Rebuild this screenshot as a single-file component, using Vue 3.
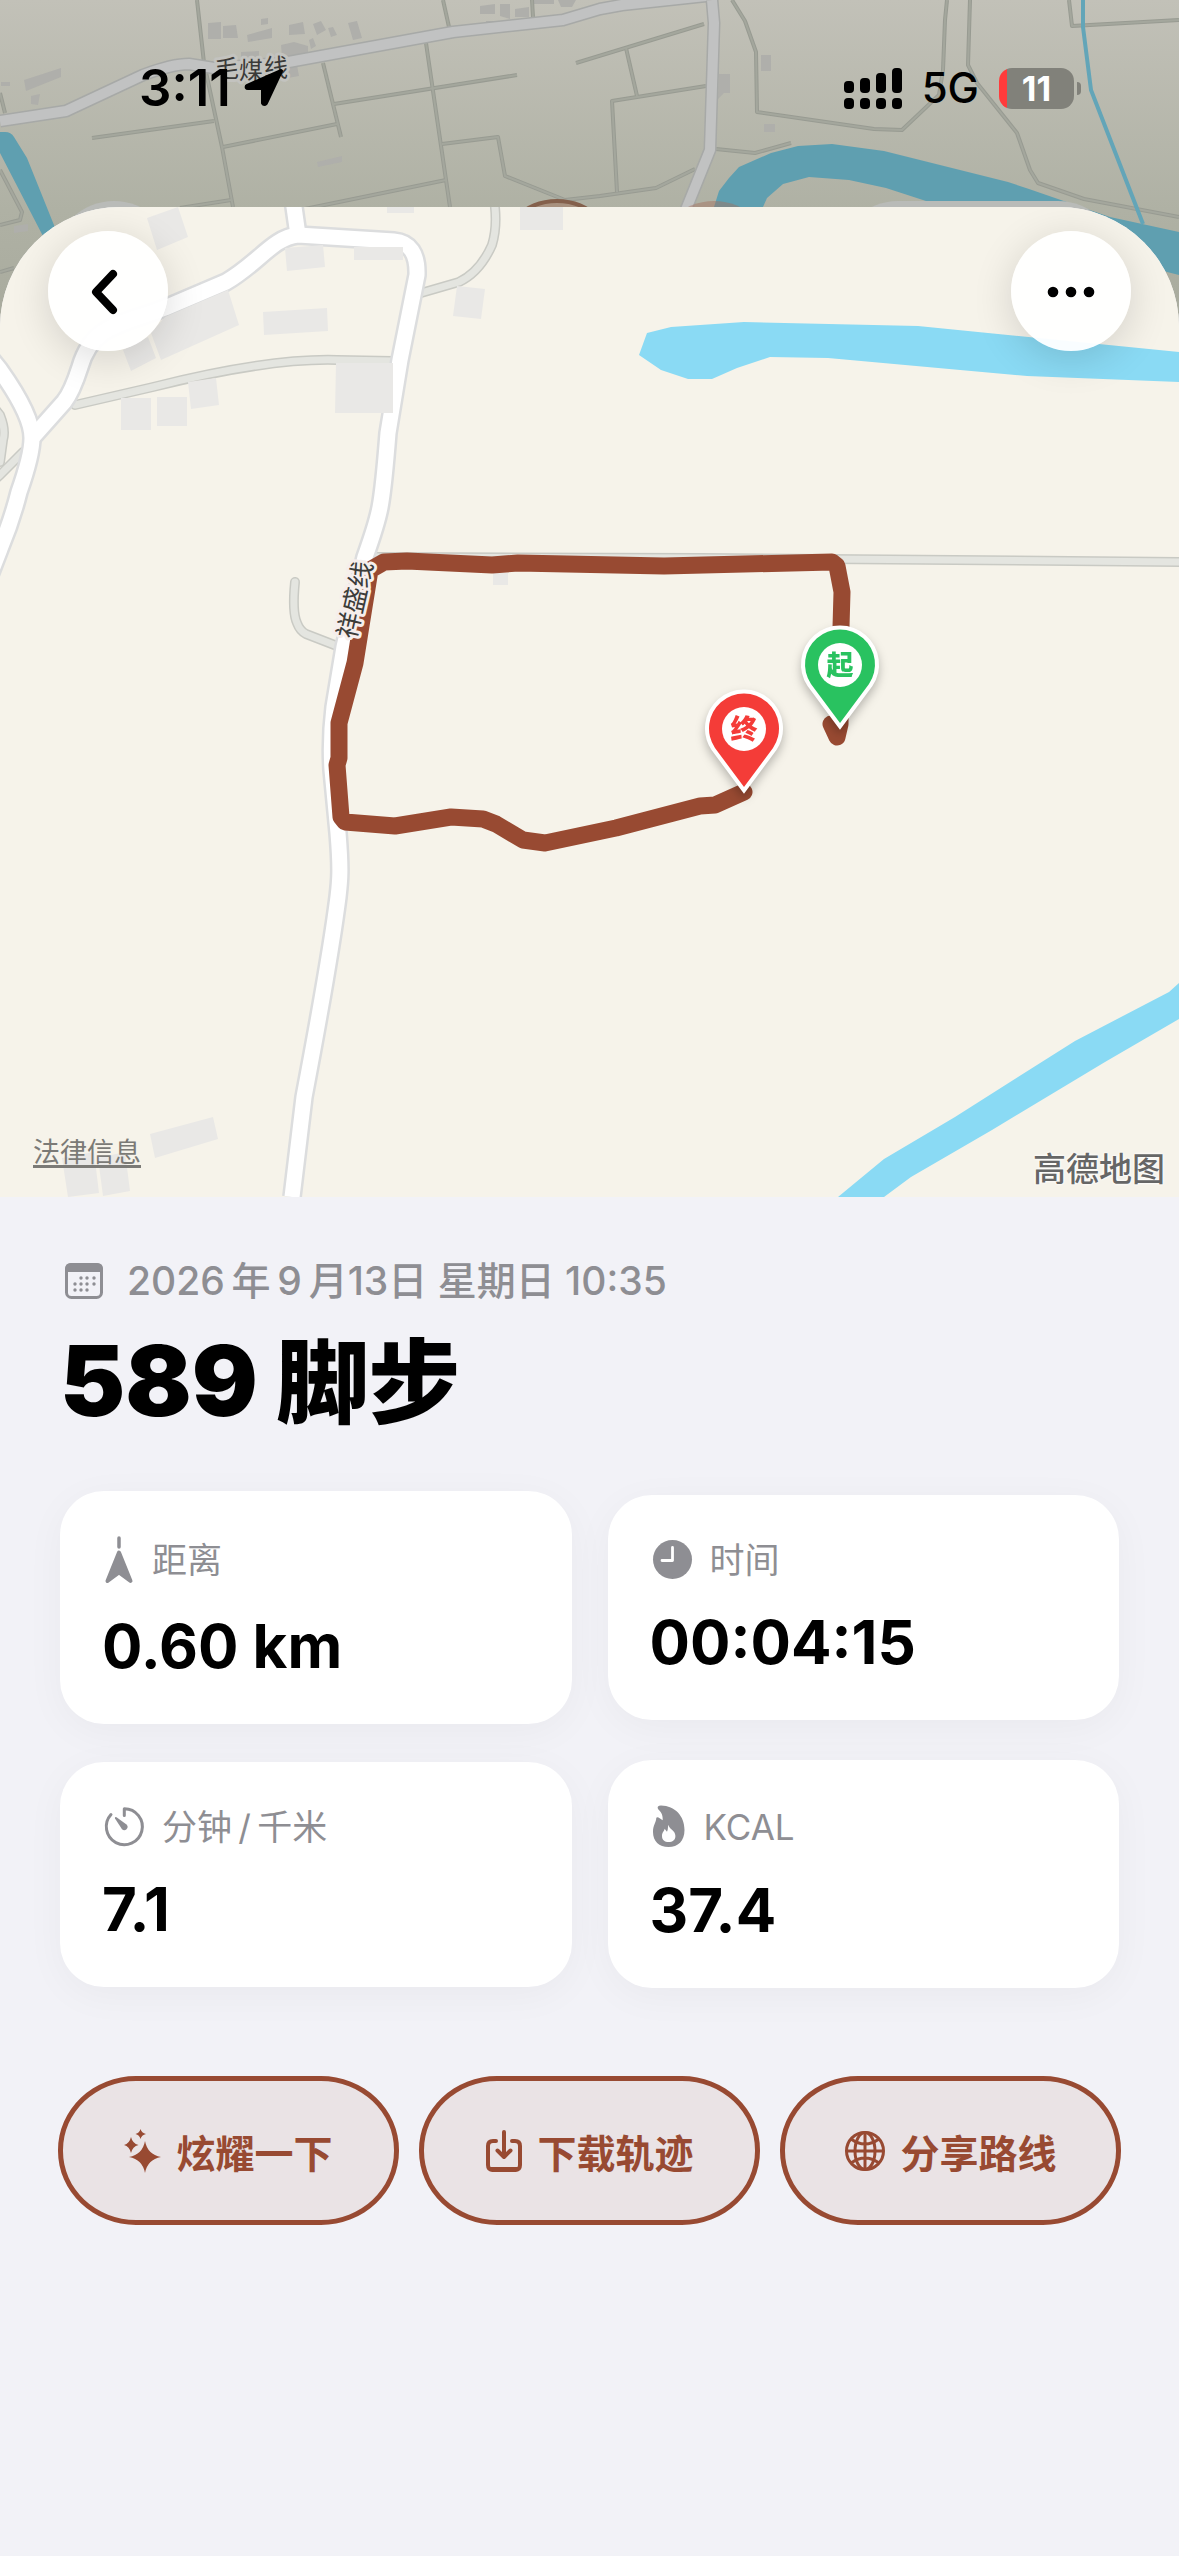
<template>
  <div class="screen">
    <svg class="backdrop" viewBox="0 0 1179 420" aria-hidden="true">
      <defs>
        <linearGradient id="dim" x1="0" y1="0" x2="0" y2="1">
          <stop offset="0" stop-color="#c2c1b8" />
          <stop offset=".5" stop-color="#afb1a4" />
          <stop offset="1" stop-color="#a3a598" />
        </linearGradient>
      </defs>
      <rect width="1179" height="420" fill="url(#dim)" />
      <path class="b-house" :d="backHouses" />
      <path v-for="d in backLanes" :key="d" class="b-lane-edge" :d="d" />
      <path v-for="d in backLanes" :key="d" class="b-lane" :d="d" />
      <path v-for="d in backRoads" :key="d" class="b-road-edge" :d="d" />
      <path v-for="d in backRoads" :key="d" class="b-road" :d="d" />
      <path class="b-water" d="M714 207L719 191L729 178L739 167L771 153L798 146L832 144L884 151L1008 182L1029 189L1110 217L1179 232V275L1100 255L926 201L886 188L849 180L809 177L783 184L767 198L763 207V230H708Z" />
      <path class="b-water" d="M0 132H5Q11 132 14 137L27 158L60 240H45L0 153Z" />
      <path class="b-stream" d="M1083 0V27L1091 90L1143 224" />
      <circle cx="114" cy="261" r="60" fill="#b9bbb8" />
      <rect x="838" y="201" width="280" height="120" rx="60" fill="#b9bbb8" />
      <circle cx="557" cy="261" r="60" fill="#a8917f" stroke="#84604c" stroke-width="4" />
      <circle cx="714" cy="261" r="60" fill="#a56e5e" fill-opacity=".45" />
      <text class="road-name dim" x="215 239 264" y="77 79 76">毛煤线</text>
    </svg>

    <header class="status">
      <div class="status-left">
        <span class="clock">3:11</span>
        <svg width="42" height="40" viewBox="0 0 42 40" aria-hidden="true">
          <path d="M38 3L4 18Q3 20 5 20H20V35Q21 37 23 35Z" stroke="#000" stroke-width="4" stroke-linejoin="round" />
        </svg>
      </div>
      <div class="status-right">
        <svg width="58" height="41" viewBox="0 0 58 41" aria-hidden="true">
          <rect v-for="(h, i) in [12, 15, 20, 25]" :key="h" :x="i * 16" :y="25 - h" width="10" :height="h" rx="4" />
          <rect v-for="i in 4" :key="'s' + i" :x="i * 16 - 16" y="30" width="10" height="11" rx="4" />
        </svg>
        <span class="network">5G</span>
        <span class="battery"><span>11</span></span>
      </div>
    </header>

    <main class="sheet">
      <div class="map">
        <svg class="map-art" viewBox="0 207 1179 990" role="img" aria-label="路线地图">
          <rect y="207" width="1179" height="990" fill="#f6f3ea" />
          <path class="water" d="M639 355L647 333L671 327L744 322L918 326L1179 352V382L1027 376L828 358L770 357L737 368L712 379H688L661 370Z" />
          <path class="water" d="M1179 983L1169 992L1075 1041L955 1117L884 1159L838 1197H884L911 1177L992 1130L1105 1062L1179 1019Z" />
          <path v-for="d in lanes" :key="d" class="lane-edge" :d="d" />
          <path v-for="d in lanes" :key="d" class="lane" :d="d" />
          <path v-for="d in roads" :key="d" class="road-edge" :d="d" />
          <path v-for="d in roads" :key="d" class="road" :d="d" />
          <path class="house" :d="houses" />
          <path class="route" d="M831 724L837 737L840 724L841 627L842 592L837 566L832 562L664 566L518 563L492 565L407 561L384 562L370 570L355 663L339 723L339 758L337 765L341 817L345 822L395 826L451 817L483 819L496 824L523 840L545 843L616 828L700 806L715 805L744 792" />
          <text class="road-name" transform="translate(364 602) rotate(-77)" text-anchor="middle">祥盛线</text>
          <g v-for="p in pins" :key="p.label" class="pin" :transform="`translate(${p.x} ${p.y})`">
            <path class="pin-edge" :d="pinShape" />
            <path :fill="p.color" :d="pinShape" />
            <circle r="22" fill="#fff" />
            <text text-anchor="middle" y="10" :fill="p.color">{{ p.label }}</text>
          </g>
        </svg>
        <button class="round back" aria-label="返回">
          <svg width="48" height="48" viewBox="0 0 48 48"><path d="M29 7L12 25L29 43" fill="none" stroke="#000" stroke-width="8" stroke-linecap="round" stroke-linejoin="round" /></svg>
        </button>
        <button class="round more" aria-label="更多">
          <svg width="48" height="48" viewBox="0 0 48 48"><circle v-for="x in [6, 24, 42]" :key="x" :cx="x" cy="25" r="5.3" /></svg>
        </button>
        <a class="legal" href="#">法律信息</a>
        <span class="brand">高德地图</span>
      </div>

      <section class="summary">
        <p class="date">
          <svg width="38" height="36" viewBox="0 0 38 36" aria-hidden="true">
            <rect x="1.5" y="1.5" width="35" height="33" rx="5" fill="none" stroke="#8e8e93" stroke-width="3" />
            <path d="M0 9V6Q0 0 6 0H32Q38 0 38 6V9Z" fill="#8e8e93" />
            <circle v-for="[x, y] in calendarDots" :key="`${x}-${y}`" :cx="x" :cy="y" r="1.7" fill="#8e8e93" />
          </svg>
          <time datetime="2026-09-13T10:35">2026&thinsp;年&thinsp;9&thinsp;月13日 星期日 10:35</time>
        </p>
        <h1><span class="count">589</span> 脚步</h1>
      </section>

      <dl class="stats">
        <div v-for="s in stats" :key="s.label" class="card">
          <dt>
            <svg v-if="s.icon === 'distance'" width="34" height="54" viewBox="0 0 34 54">
              <path d="M17 5V14" stroke="#8e8e93" stroke-width="3.5" stroke-linecap="round" />
              <path d="M17 19.5L28.5 48L17 39.5L5.5 48Z" fill="#8e8e93" stroke="#8e8e93" stroke-width="4" stroke-linejoin="round" />
            </svg>
            <svg v-else-if="s.icon === 'time'" width="44" height="46" viewBox="0 0 44 46">
              <circle cx="22.5" cy="22.5" r="19.5" fill="#8e8e93" />
              <path d="M22.5 10.5V23.5H12" fill="none" stroke="#fff" stroke-width="2.8" stroke-linecap="round" stroke-linejoin="round" />
            </svg>
            <svg v-else-if="s.icon === 'pace'" width="44" height="46" viewBox="0 0 44 46">
              <path d="M22.3 11.5V4.7A18 18 0 1 1 9 10.6" fill="none" stroke="#8e8e93" stroke-width="3" stroke-linecap="round" stroke-linejoin="round" />
              <path d="M13.2 13.2Q13.8 12.7 14.5 13.2L24.5 20.6A3.2 3.2 0 0 1 20 25.2L13 14.5Q12.7 13.7 13.2 13.2Z" fill="#8e8e93" />
            </svg>
            <svg v-else width="38" height="49" viewBox="0 0 38 49">
              <path fill="#8e8e93" fill-rule="evenodd" d="M8 7C7 5 8 3.6 11 3.6C25 4 34.5 14 34.5 28C34.5 39 28 45 18.6 45C9 45 3 39 3 30C3 23 6 21 6.3 16Q6.6 14.6 8.5 15.5L12.7 18.3C13 12 10.5 9.5 8 7ZM18.6 22.7C18.6 27 25.4 28 25.4 34C25.4 38 22.5 40 18.6 40C14.8 40 12 38 12 34C12 30 14.5 29 14.6 26.8L17 29.7C18.5 27 17.5 24.5 18.6 22.7Z" />
            </svg>
            {{ s.label }}
          </dt>
          <dd>{{ s.value }}</dd>
        </div>
      </dl>

      <div class="actions">
        <button>
          <svg width="38" height="44" viewBox="0 0 38 44">
            <path d="M21 12Q23.5 25.5 37 28Q23.5 30.5 21 44Q18.5 30.5 5 28Q18.5 25.5 21 12ZM7 8Q8.5 14.5 14.5 16Q8.5 17.5 7 24Q5.5 17.5 0 16Q5.5 14.5 7 8ZM16.5 0Q17.5 4 22 5Q17.5 6 16.5 10Q15.5 6 11.5 5Q15.5 4 16.5 0Z" fill="#984a32" />
          </svg>
          炫耀一下
        </button>
        <button>
          <svg width="38" height="44" viewBox="0 0 38 44">
            <g fill="none" stroke="#984a32" stroke-width="4" stroke-linecap="round" stroke-linejoin="round">
              <path d="M11 12H8Q3 12 3 17V36Q3 41 8 41H30Q35 41 35 36V17Q35 12 30 12H27" />
              <path d="M19 3V27M12.5 21.5L19 28L25.5 21.5" />
            </g>
            <path d="M4 38H34L31 43H7Z" fill="#984a32" />
          </svg>
          下载轨迹
        </button>
        <button>
          <svg width="42" height="44" viewBox="0 0 42 44">
            <g fill="none" stroke="#984a32" stroke-width="3">
              <circle cx="21" cy="22" r="18.5" />
              <ellipse cx="21" cy="22" rx="10" ry="18.5" />
              <path d="M21 3V41M2 22H40M7 10Q21 20 35 10M7 34Q21 24 35 34" />
            </g>
          </svg>
          分享路线
        </button>
      </div>
    </main>
  </div>
</template>

<script setup>
const stats = [
  { icon: 'distance', label: '距离', value: '0.60 km' },
  { icon: 'time', label: '时间', value: '00:04:15' },
  { icon: 'pace', label: '分钟\u2009/\u2009千米', value: '7.1' },
  { icon: 'kcal', label: 'KCAL', value: '37.4' },
]

const calendarDots = [
  [16, 15], [22, 15], [29, 15],
  [10, 21], [16, 21], [22, 21], [29, 21],
  [10, 27], [16, 27], [22, 27],
]

// teardrop around (0,0), the tip points at the spot
const pinShape = 'M0 58L-29 19A35 35 0 1 1 29 19Z'
const pins = [
  { label: '起', x: 840, y: 665, color: '#29c260' },
  { label: '终', x: 744, y: 729, color: '#f43c38' },
]

const roads = [
  'M-12 580L0 549Q12 520 19 492Q32 455 32 438Q32 415 0 370L-12 355',
  'M32 438L64 402Q72 392 80 367C92 325 120 325 165 308L226 282C260 262 272 238 298 235L394 241Q418 243 417 275L400 360L388 433C382 510 380 515 365 557L344 647L334 707Q330 740 332 770L338 833C341 870 340 880 338 897Q330 960 304 1097L292 1197',
  'M293 200L298 235',
]
const lanes = [
  'M494 200Q498 225 492 245Q480 272 459 282L421 293',
  'M75 405L153 387Q268 358 337 360L392 361',
  'M-8 405L0 415Q6 430 3 440L0 462',
  'M-8 482L0 475L23 452',
  'M295 582Q292 612 297 623Q300 631 306 634L337 646',
  'M377 557L700 558L1190 562',
]
const houses = [
  'M147 218L178 207L188 237L157 250Z',
  'M387 207H414V213H387Z',
  'M520 207H563V230H520Z',
  'M285 248L323 245L325 267L287 271Z',
  'M354 247H403V260H354Z',
  'M457 286L485 289L481 319L453 316Z',
  'M263 312L327 308L328 331L264 335Z',
  'M165 317L228 290L239 325L161 360L151 333Z',
  'M123 350L148 337L156 358L131 371Z',
  'M121 398H151V430H121Z',
  'M157 397H187V426H157Z',
  'M188 382L216 378L219 405L191 409Z',
  'M336 363H393V413H335Z',
  'M493 573H508V585H493Z',
  'M150 1134L213 1117L218 1139L155 1158Z',
  'M62 1158L94 1152L99 1193L68 1197Z',
  'M98 1158L125 1152L130 1191L103 1196Z',
].join('')

const backRoads = [
  'M0 121L66 111L143 75Q172 64 189 64L214 68L283 63L453 32L563 20L600 9L622 5L706 -4',
  'M712 0L714 23L710 150L685 212',
]
const backLanes = [
  'M197 0L204 63L222 147L233 207',
  'M92 138L214 121',
  'M223 147L337 124',
  'M323 63L341 137',
  'M334 104L517 75',
  'M426 43L446 180L450 207',
  'M300 210L446 180',
  'M442 144L498 137L505 176L565 200L600 196L656 188L695 169',
  'M443 0L449 27',
  'M532 0L533 17',
  'M576 63L704 24',
  'M180 208L231 200',
  'M0 170L22 212L20 220L0 225',
  'M0 93L5 113',
  'M0 272L14 268',
  'M626 48L637 96',
  'M706 86L612 101L617 192',
  'M732 0L745 21L756 52L757 112L874 129L902 130L939 95L943 70L945 20L947 0',
  'M970 0L968 65L977 83L1017 133L1030 170L1038 183L1084 199L1179 217',
  'M1069 0L1072 26L1179 20',
  'M716 149L755 153L791 143',
]
const backHouses = [
  'M208 23L221 22V39H208Z', 'M223 26L236 25L238 38H223Z', 'M247 35L272 28V38L248 42Z',
  'M289 25L303 22L305 34L289 35Z', 'M313 24L321 21L326 30L317 35Z', 'M328 28L333 27L337 35L331 37Z',
  'M348 23L357 21L362 38L353 40Z', 'M261 19L268 18V24L261 25Z', 'M281 45L294 42L308 46V54L282 57Z',
  'M241 52L259 51V58H241Z', 'M309 40L313 38L316 46L311 49Z', 'M288 67L297 65L299 76L288 78Z',
  'M24 80L61 68V77L26 91Z', 'M31 96L40 94L38 105L31 104Z', 'M317 162L342 156V162L318 167Z',
  'M480 6L495 4V14H480Z', 'M500 4H510V19L500 16Z', 'M515 9L529 7V17H515Z', 'M486 21H496V27H486Z',
  'M532 0H554V4H534Z', 'M558 0H576L572 7H561Z', 'M761 55H771V71H761Z', 'M764 124H775V132H764Z',
  'M719 74H730V93H724L718 99Z', 'M14 226L28 224V231L14 233Z', 'M1 82H10V86H1Z',
].join('')
</script>

<style>
body { background: #f2f2f7; }
</style>

<style scoped>
.screen {
  position: relative; min-height: 100vh; background: #f2f2f7; color: #000;
  font-family: Inter, "Noto Sans CJK SC", sans-serif;
}
button { font: inherit; color: inherit; border: none; padding: 0; cursor: pointer; }
svg { flex-shrink: 0; }

.backdrop { position: absolute; top: 0; left: 0; width: 100%; height: auto; }
.b-house { fill: #afafab; }
.b-lane-edge, .b-lane, .b-road-edge, .b-road, .b-stream { fill: none; stroke-linejoin: round; }
.b-lane-edge { stroke: #989b92; stroke-width: 4; }
.b-lane { stroke: #a4a79d; stroke-width: 2; }
.b-road-edge { stroke: #a7a9a7; stroke-width: 13; }
.b-road { stroke: #c1c2c2; stroke-width: 10; }
.b-water { fill: #5f9fb0; }
.b-stream { stroke: #63a5b8; stroke-width: 4; }

.status {
  position: relative; display: flex; justify-content: space-between;
  padding: 58px 105px 89px 139px; line-height: 60px;
}
.status-left, .status-right { display: flex; align-items: center; }
.status-left { gap: 12px; }
.clock { font-size: 51px; font-weight: 600; }
.status-right { gap: 20px; }
.network { font-size: 42px; font-weight: 500; }
.battery {
  position: relative; width: 75px; height: 41px; border-radius: 13px;
  background: linear-gradient(90deg, #ff3b3b 8px, #81817a 8px);
  color: #fff; font-size: 34px; font-weight: 700; line-height: 41px; text-align: center;
}
.battery::after {
  content: ''; position: absolute; left: 78px; top: 14px; width: 4px; height: 13px;
  border-radius: 0 4px 4px 0; background: #81817a;
}

.sheet { position: relative; border-radius: 120px 120px 0 0; overflow: hidden; background: #f2f2f7; }
.map { position: relative; }
.map-art { display: block; width: 100%; height: auto; }
.water { fill: #8adaf4; }
.house { fill: #e9e8e6; }
.lane-edge, .lane, .road-edge, .road, .route { fill: none; stroke-linejoin: round; }
.lane-edge { stroke: #c9cac4; stroke-width: 10; stroke-linecap: round; }
.lane { stroke: #e4e5e0; stroke-width: 7; stroke-linecap: round; }
.road-edge { stroke: #dcddde; stroke-width: 20; }
.road { stroke: #fff; stroke-width: 15; }
.route { stroke: #984a32; stroke-width: 17; stroke-linecap: round; }
.road-name {
  font-size: 26px; fill: #3c3c3a; stroke: #f6eeec; stroke-width: 6;
  stroke-linejoin: round; paint-order: stroke;
}
.road-name.dim { font-size: 24px; stroke: #c3c3bf; fill: #3a3a38; }
.pin { filter: drop-shadow(0 5px 5px rgba(0,0,0,.25)); }
.pin-edge { fill: #fff; stroke: #fff; stroke-width: 8; }
.pin text { font-size: 27px; font-weight: 900; }

.round {
  position: absolute; top: 24px; width: 120px; height: 120px; border-radius: 50%;
  display: flex; align-items: center; justify-content: center;
  background: rgba(255,255,255,.95); box-shadow: 0 8px 40px rgba(0,0,0,.14);
}
.back { left: 48px; }
.more { right: 48px; }
.legal {
  position: absolute; left: 33px; bottom: 26px; font-size: 27px; line-height: 36px;
  color: #7b7a76; text-decoration: underline; text-decoration-thickness: 3px; text-underline-offset: 3px;
}
.brand {
  position: absolute; right: 14px; bottom: 8px; font-size: 33px; font-weight: 500; line-height: 40px;
  color: #666; text-shadow: 0 0 3px #fff, 0 0 3px #fff;
}

.summary { padding: 60px 60px 0; }
.date {
  margin: 0; padding-left: 5px; display: flex; align-items: center; gap: 24px;
  font-size: 39px; font-weight: 500; line-height: 48px; color: #8e8e93;
}
h1 { margin: 16px 0 0; font-size: 92px; font-weight: 900; line-height: 120px; }
.count { font-size: 98px; }

.stats {
  margin: 0; padding: 48px 60px 0; display: grid; grid-template-columns: 1fr 1fr;
  gap: 36px; align-items: center;
}
.card {
  padding: 42px; border-radius: 44px; background: #fff; box-shadow: 0 8px 40px rgba(0,0,0,.04);
}
dt {
  display: flex; align-items: center; gap: 16px;
  font-size: 35px; line-height: 46px; color: #8e8e93;
}
dd { margin: 23px 0 0; font-size: 60px; font-weight: 700; line-height: 72px; }

.actions {
  display: grid; grid-template-columns: repeat(3, 1fr); gap: 20px; padding: 88px 58px 40px;
}
.actions button {
  display: flex; align-items: center; justify-content: center; gap: 14px; height: 149px;
  border: 5px solid #984a32; border-radius: 78px / 74px; background: #eae3e5;
  color: #984a32; font-size: 39px; font-weight: 700;
}
</style>
